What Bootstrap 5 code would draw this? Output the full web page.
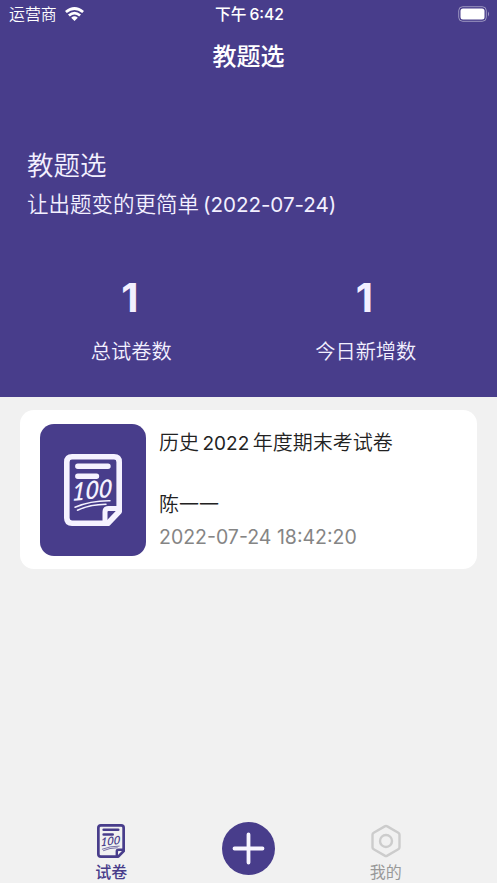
<!DOCTYPE html>
<html lang="zh-CN">
<head>
<meta charset="utf-8">
<meta name="viewport" content="width=device-width, initial-scale=1">
<title>教题选</title>
<link href="https://cdn.jsdelivr.net/npm/bootstrap@5.3.0/dist/css/bootstrap.min.css" rel="stylesheet">
<style>
:root{--brand:#483d8b}
body{font-family:Inter,"Noto Sans CJK SC",sans-serif;background:#f1f1f1;color:#222;min-height:883px}
svg{display:block;flex:none}
.hero{background:var(--brand);height:397px;color:#f3f0ff}
.status{height:28px;line-height:28px;font-size:15.9px;padding:0 7px 0 9px;color:#fff}
.carrier,.status-time{padding-top:1px}
.carrier{font-weight:350}
.status-time{font-weight:500;font-size:15.7px}
.status-clock{margin-left:3px}
.page-title{height:57px;line-height:57px;font-size:24px;font-weight:500;color:#fff}
.intro{padding:60px 27px 0}
.intro-name{font-size:26.5px;line-height:40px;font-weight:350}
.intro-line{font-size:21.5px;line-height:39px;font-weight:350;white-space:nowrap}
.intro-date{font-size:20.6px;margin-left:4px;font-weight:400;letter-spacing:-.05px}
.stats{padding:47px 14px 0}
.stat-num{font-size:40px;line-height:54px;font-weight:700;margin-left:-3px}
.stat-label{font-size:20.2px;line-height:54px;font-weight:350}
.paper{margin:13px 20px 0;padding:14px 20px 13px;height:159px;border-radius:14px;gap:13px;font-weight:350}
.thumb{width:106px;height:132px;border-radius:14px;background:var(--brand);color:#f5f2ff}
.paper-title{font-size:20px;line-height:38px;white-space:nowrap}
.paper-year{margin:0 3.5px;font-size:19px;font-weight:400}
.paper-author{font-size:20px;line-height:34px;margin-top:25px}
.paper-time{font-size:19.5px;line-height:31px;font-weight:400;color:#858585;white-space:nowrap}
.tabs{width:412px;height:67px}
.tab{font-size:16px;line-height:21px;color:#999;gap:4px}
.tab.on{color:var(--brand);font-weight:500}
.score{font-family:Lato,sans-serif;font-style:italic;font-weight:600;font-size:24.5px}
</style>
</head>
<body class="d-flex flex-column">
<header class="hero">
  <div class="status d-flex align-items-center">
    <div class="col d-flex align-items-center"><span class="carrier">运营商</span>
      <svg class="ms-2" width="19" height="14" viewBox="0 0 19 14" fill="none" stroke="#fff" stroke-width="2.800"><path d="M.9 5Q9.500-2 18.100 5M3.900 8.500Q9.500 3.700 15.100 8.500"/><path d="M6.200 10.700Q9.500 8 12.800 10.700L9.500 14Z" fill="#fff" stroke="none"/></svg>
    </div>
    <div class="status-time">下午<span class="status-clock">6:42</span></div>
    <div class="col d-flex justify-content-end">
      <svg width="32" height="16" viewBox="0 0 32 16"><rect x=".7" y=".7" width="27.600" height="14.600" rx="4" fill="none" stroke="#fff" stroke-opacity=".45"/><rect x="2.500" y="2.500" width="24" height="11" rx="2.500" fill="#fff"/><path d="M30 5.500Q32 8 30 10.500Z" fill="#fff" opacity=".5"/></svg>
    </div>
  </div>
  <h1 class="page-title text-center m-0">教题选</h1>
  <section class="intro">
    <div class="intro-name">教题选</div>
    <div class="intro-line">让出题变的更简单<span class="intro-date">(2022-07-24)</span></div>
  </section>
  <section class="stats d-flex text-center">
    <div class="col"><div class="stat-num">1</div><div class="stat-label">总试卷数</div></div>
    <div class="col"><div class="stat-num">1</div><div class="stat-label">今日新增数</div></div>
  </section>
</header>
<main class="flex-grow-1">
  <article class="paper bg-white d-flex">
    <div class="thumb d-flex align-items-center justify-content-center">
      <svg width="58" height="72" viewBox="0 0 58 72">
        <g fill="none" stroke="currentColor" stroke-linejoin="round">
          <path stroke-width="5.600" d="M44 69.200H8Q2.800 69.200 2.800 64V8Q2.800 2.800 8 2.800H50Q55.200 2.800 55.200 8V57.500L44 69.200Z"/>
          <path stroke-width="5" d="M41 68V58Q41 54.500 44.500 54.500H55"/>
          <path stroke-width="5.400" stroke-linecap="round" d="M13.800 12.300H44M13.800 22.300H32.500"/>
          <path stroke-width="1.500" stroke-linecap="round" d="M11 53.300Q27 46.500 46 46.800M13.500 56.300Q26 50.500 42 50.300"/>
        </g>
        <text class="score" fill="currentColor" transform="translate(7.500 47) rotate(-6) skewX(-10) scale(.95 1)">100</text>
      </svg>
    </div>
    <div>
      <div class="paper-title">历史<span class="paper-year">2022</span>年度期末考试卷</div>
      <div class="paper-author">陈一一</div>
      <div class="paper-time">2022-07-24 18:42:20</div>
    </div>
  </article>
</main>
<nav class="tabs mx-auto d-flex text-center">
  <div class="tab on col d-flex flex-column align-items-center justify-content-end">
    <svg width="28" height="34" viewBox="0 0 58 72" preserveAspectRatio="none">
      <g fill="none" stroke="currentColor" stroke-linejoin="round">
        <path stroke-width="5.600" d="M44 69.200H8Q2.800 69.200 2.800 64V8Q2.800 2.800 8 2.800H50Q55.200 2.800 55.200 8V57.500L44 69.200Z"/>
        <path stroke-width="5" d="M41 68V58Q41 54.500 44.500 54.500H55"/>
        <path stroke-width="5.400" stroke-linecap="round" d="M13.800 12.300H44M13.800 22.300H32.500"/>
        <path stroke-width="1.500" stroke-linecap="round" d="M11 53.300Q27 46.500 46 46.800M13.500 56.300Q26 50.500 42 50.300"/>
      </g>
      <text class="score" fill="currentColor" transform="translate(7.500 47) rotate(-6) skewX(-10) scale(.95 1)">100</text>
    </svg><span>试卷</span></div>
  <div class="col d-flex justify-content-center">
    <svg class="mt-auto mb-2" width="53" height="53" viewBox="0 0 53 53"><circle cx="26.500" cy="26.500" r="26.500" fill="#483d8b"/><path d="M12.500 26.500H40.500M26.500 12.500V40.500" stroke="#f7f5ff" stroke-width="3.800" stroke-linecap="round"/></svg>
  </div>
  <div class="tab col d-flex flex-column align-items-center justify-content-end"><svg width="32" height="34" viewBox="0 0 32 34" fill="none" stroke="#ccc" stroke-width="2.400" stroke-linejoin="round"><path d="M14.700 2.400Q16 1.700 17.300 2.400L28.300 8.700Q29.500 9.400 29.500 10.800V23.200Q29.500 24.600 28.300 25.300L17.300 31.600Q16 32.300 14.700 31.600L3.700 25.300Q2.500 24.600 2.500 23.200V10.800Q2.500 9.400 3.700 8.700Z"/><circle cx="16" cy="17" r="6"/></svg><span>我的</span></div>
</nav>
<script src="https://cdn.jsdelivr.net/npm/bootstrap@5.3.0/dist/js/bootstrap.bundle.min.js"></script>
</body>
</html>
